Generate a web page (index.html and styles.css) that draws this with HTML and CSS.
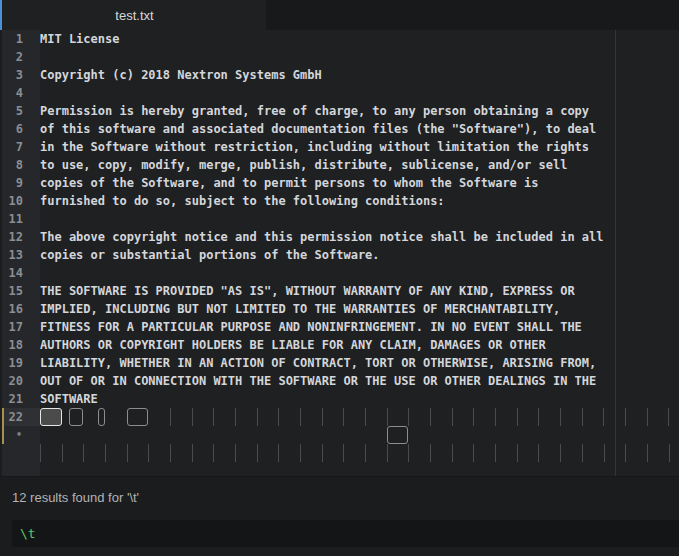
FILE: index.html
```html
<!DOCTYPE html>
<html>
<head>
<meta charset="utf-8">
<link rel="stylesheet" href="styles.css">
</head>
<body>
<div class="app">
  <div class="tabbar">
    <div class="tab active">test.txt</div>
  </div>
  <div class="editor">
    <div class="gutter">
      <div class="ln">1</div><div class="ln">2</div><div class="ln">3</div><div class="ln">4</div>
      <div class="ln">5</div><div class="ln">6</div><div class="ln">7</div><div class="ln">8</div>
      <div class="ln">9</div><div class="ln">10</div><div class="ln">11</div><div class="ln">12</div>
      <div class="ln">13</div><div class="ln">14</div><div class="ln">15</div><div class="ln">16</div>
      <div class="ln">17</div><div class="ln">18</div><div class="ln">19</div><div class="ln">20</div>
      <div class="ln">21</div><div class="ln cur mark">22</div><div class="ln mark dot">•</div>
    </div>
    <div class="code">
      <div class="line">MIT License</div>
      <div class="line"></div>
      <div class="line">Copyright (c) 2018 Nextron Systems GmbH</div>
      <div class="line"></div>
      <div class="line">Permission is hereby granted, free of charge, to any person obtaining a copy</div>
      <div class="line">of this software and associated documentation files (the "Software"), to deal</div>
      <div class="line">in the Software without restriction, including without limitation the rights</div>
      <div class="line">to use, copy, modify, merge, publish, distribute, sublicense, and/or sell</div>
      <div class="line">copies of the Software, and to permit persons to whom the Software is</div>
      <div class="line">furnished to do so, subject to the following conditions:</div>
      <div class="line"></div>
      <div class="line">The above copyright notice and this permission notice shall be included in all</div>
      <div class="line">copies or substantial portions of the Software.</div>
      <div class="line"></div>
      <div class="line">THE SOFTWARE IS PROVIDED "AS IS", WITHOUT WARRANTY OF ANY KIND, EXPRESS OR</div>
      <div class="line">IMPLIED, INCLUDING BUT NOT LIMITED TO THE WARRANTIES OF MERCHANTABILITY,</div>
      <div class="line">FITNESS FOR A PARTICULAR PURPOSE AND NONINFRINGEMENT. IN NO EVENT SHALL THE</div>
      <div class="line">AUTHORS OR COPYRIGHT HOLDERS BE LIABLE FOR ANY CLAIM, DAMAGES OR OTHER</div>
      <div class="line">LIABILITY, WHETHER IN AN ACTION OF CONTRACT, TORT OR OTHERWISE, ARISING FROM,</div>
      <div class="line">OUT OF OR IN CONNECTION WITH THE SOFTWARE OR THE USE OR OTHER DEALINGS IN THE</div>
      <div class="line">SOFTWARE</div>
      <div class="line tabs"><span class="m sel w3"></span><span class="gap1"></span><span class="m w2"></span><span class="gap2"></span><span class="m w1"></span><span class="gap3"></span><span class="m w3"></span><span class="gap3"></span><span class="ticks t24"></span></div>
      <div class="line tabs"><span class="gap48"></span><span class="m w3"></span></div>
      <div class="line tabs"><span class="ticks t30"></span></div>
    </div>
    <div class="ruler"></div>
  </div>
  <div class="panel">
    <div class="status">12 results found for '\t'</div>
    <div class="query">\t</div>
  </div>
</div>
</body>
</html>
```

FILE: styles.css
```css
html, body {
  margin: 0;
  padding: 0;
  background: #1b1c1e;
}

.app {
  width: 679px;
  height: 556px;
  display: flex;
  flex-direction: column;
  overflow: hidden;
}

.tabbar {
  height: 30px;
  flex: none;
  display: flex;
  background: #18191b;
}

.tab {
  width: 266px;
  box-sizing: border-box;
  display: flex;
  align-items: center;
  justify-content: center;
  font-family: "Liberation Sans", Arial, sans-serif;
  font-size: 13px;
  color: #d6d7d9;
}

.tab.active {
  background: #1f2022;
  border-left: 2px solid #4a90d9;
  padding-left: 1px;
}

.editor {
  position: relative;
  height: 446px;
  flex: none;
  display: flex;
  background: #1f2022;
}

.gutter {
  width: 38px;
  flex: none;
  border-left: 2px solid #1c1d1f;
  background: #25272a;
  font-family: "DejaVu Sans Mono", monospace;
  font-size: 12px;
  font-weight: bold;
  color: #8b8e92;
}

.ln {
  height: 18px;
  line-height: 18px;
  box-sizing: border-box;
  padding-right: 17px;
  text-align: right;
  border-left: 2px solid transparent;
}

.ln.mark {
  border-left-color: #a8904f;
}

.ln.cur {
  background: #2e3033;
}

.ln.dot {
  padding-right: 18px;
  font-size: 10px;
  color: #7a7d81;
}

.code {
  flex: 1;
  font-family: "DejaVu Sans Mono", monospace;
  font-size: 12px;
  font-weight: bold;
  color: #d3d6da;
}

.line {
  height: 18px;
  line-height: 18px;
  white-space: pre;
}

.tabs {
  display: flex;
  align-items: stretch;
}

.m {
  flex: none;
  box-sizing: border-box;
  height: 18px;
  border: 1px solid #8c8d90;
  border-radius: 3px;
}

.m.sel {
  border-color: #e6e6e6;
  background: #4b4b4c;
}

.w1 { width: 1ch; }
.w2 { width: 2ch; }
.w3 { width: 3ch; }
.gap1 { flex: none; width: 1ch; }
.gap2 { flex: none; width: 2ch; }
.gap3 { flex: none; width: 3ch; }
.gap48 { flex: none; width: 48ch; }

.ticks {
  flex: none;
  height: 18px;
  background: repeating-linear-gradient(to right, #4a4c50 0, #4a4c50 1px, transparent 1px, transparent 3ch);
}

.t24 { width: 72ch; }
.t30 { width: 90ch; }

.ruler {
  position: absolute;
  left: 615px;
  top: 0;
  bottom: 0;
  width: 1px;
  background: #333538;
}

.panel {
  flex: 1;
  background: #1b1c1e;
  border-top: 1px solid #161719;
  padding: 0 0 0 12px;
  display: flex;
  flex-direction: column;
}

.status {
  margin-top: 12px;
  height: 17px;
  line-height: 17px;
  font-family: "Liberation Sans", Arial, sans-serif;
  font-size: 13px;
  color: #b2b3b5;
}

.query {
  margin-top: 14px;
  height: 27px;
  line-height: 27px;
  padding-left: 8px;
  background: #141517;
  font-family: "DejaVu Sans Mono", monospace;
  font-size: 13px;
  color: #5fc465;
}
```
